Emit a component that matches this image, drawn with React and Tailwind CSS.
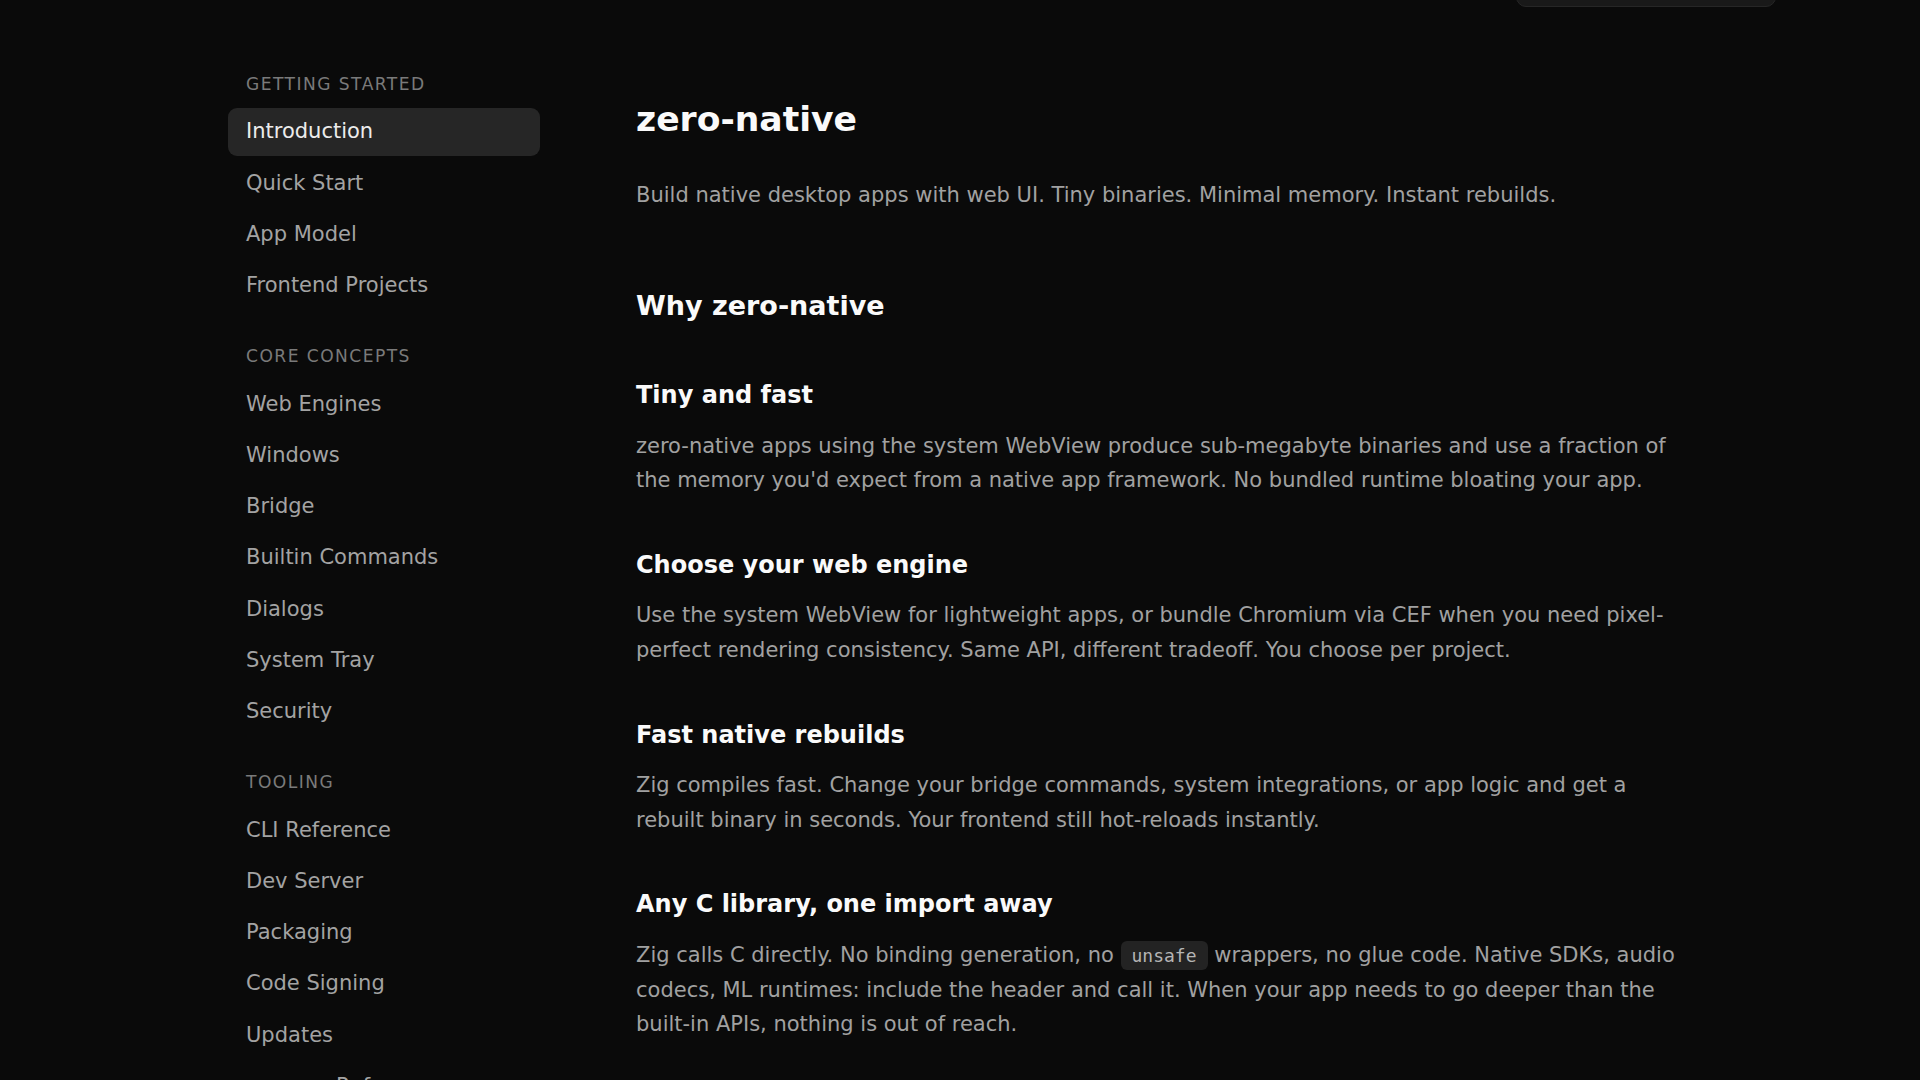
import React from 'react';

const nav = [
    {
        title: 'Getting Started',
        items: ['Introduction', 'Quick Start', 'App Model', 'Frontend Projects'],
    },
    {
        title: 'Core Concepts',
        items: ['Web Engines', 'Windows', 'Bridge', 'Builtin Commands', 'Dialogs', 'System Tray', 'Security'],
    },
    {
        title: 'Tooling',
        items: ['CLI Reference', 'Dev Server', 'Packaging', 'Code Signing', 'Updates', 'app.zon Reference'],
    },
];

const sections = [
    {
        title: 'Tiny and fast',
        body: "zero-native apps using the system WebView produce sub-megabyte binaries and use a fraction of the memory you'd expect from a native app framework. No bundled runtime bloating your app.",
    },
    {
        title: 'Choose your web engine',
        body: 'Use the system WebView for lightweight apps, or bundle Chromium via CEF when you need pixel-perfect rendering consistency. Same API, different tradeoff. You choose per project.',
    },
    {
        title: 'Fast native rebuilds',
        body: 'Zig compiles fast. Change your bridge commands, system integrations, or app logic and get a rebuilt binary in seconds. Your frontend still hot-reloads instantly.',
    },
];

const Sidebar = () => (
    <aside className="ml-[228px] w-[312px] shrink-0 pt-[71.5px] flex flex-col gap-[34px]">
        {nav.map((group) => (
            <div key={group.title}>
                <div className="px-[18px] h-[26px] flex items-center text-[17.1px] tracking-[0.085em] uppercase text-[#7a7a7a] mb-[10.5px]">
                    {group.title}
                </div>
                <ul className="flex flex-col gap-[3.25px]">
                    {group.items.map((item, i) => {
                        const active = group.title === 'Getting Started' && i === 0;
                        return (
                            <li
                                key={item}
                                className={
                                    active
                                        ? 'h-[48px] px-[18px] flex items-center rounded-[9px] bg-[#262626] text-[#ececec] text-[21px]'
                                        : 'h-[48px] px-[18px] flex items-center rounded-[9px] text-[#a3a3a3] text-[21px]'
                                }
                            >
                                {item}
                            </li>
                        );
                    })}
                </ul>
            </div>
        ))}
    </aside>
);

const App = () => {
    return (
        <div
            className="relative h-[1080px] overflow-hidden bg-[#0a0a0a]"
            style={{ fontFamily: '"DejaVu Sans", "Liberation Sans", sans-serif' }}
        >
            <div className="absolute top-[-40px] left-[1516px] w-[260px] h-[47px] rounded-[10px] bg-[#191919] border border-[#262626]" />

            <div className="flex">
                <Sidebar />

                <main className="ml-[96px] w-[1050px] pt-[99px]">
                    <h1 className="text-[34.6px] leading-[41px] font-bold text-[#fafafa]">zero-native</h1>
                    <p className="mt-[38px] text-[21px] leading-[34.3px] text-[#a1a1a1]">
                        Build native desktop apps with web UI. Tiny binaries. Minimal memory. Instant rebuilds.
                    </p>

                    <h2 className="mt-[76px] text-[27px] leading-[35px] font-bold text-[#fafafa]">Why zero-native</h2>

                    <div className="mt-[55.5px]">
                        {sections.map((s) => (
                            <section key={s.title} className="mb-[51.5px]">
                                <h3 className="text-[24px] leading-[32.8px] font-bold text-[#fafafa]">{s.title}</h3>
                                <p className="mt-[17px] text-[21px] leading-[34.3px] text-[#a1a1a1]">{s.body}</p>
                            </section>
                        ))}
                        <section>
                            <h3 className="text-[24px] leading-[32.8px] font-bold text-[#fafafa]">
                                Any C library, one import away
                            </h3>
                            <p className="mt-[17px] text-[21px] leading-[34.3px] text-[#a1a1a1]">
                                Zig calls C directly. No binding generation, no{' '}
                                <code
                                    className="px-[11px] py-[4px] leading-[20px] rounded-[6px] bg-[#232323] text-[#b5b5b5] text-[18px]"
                                    style={{ fontFamily: '"DejaVu Sans Mono", "Liberation Mono", monospace' }}
                                >
                                    unsafe
                                </code>{' '}
                                wrappers, no glue code. Native SDKs, audio codecs, ML runtimes: include the header and call
                                it. When your app needs to go deeper than the built-in APIs, nothing is out of reach.
                            </p>
                        </section>
                    </div>
                </main>
            </div>
        </div>
    );
};

export default App;
